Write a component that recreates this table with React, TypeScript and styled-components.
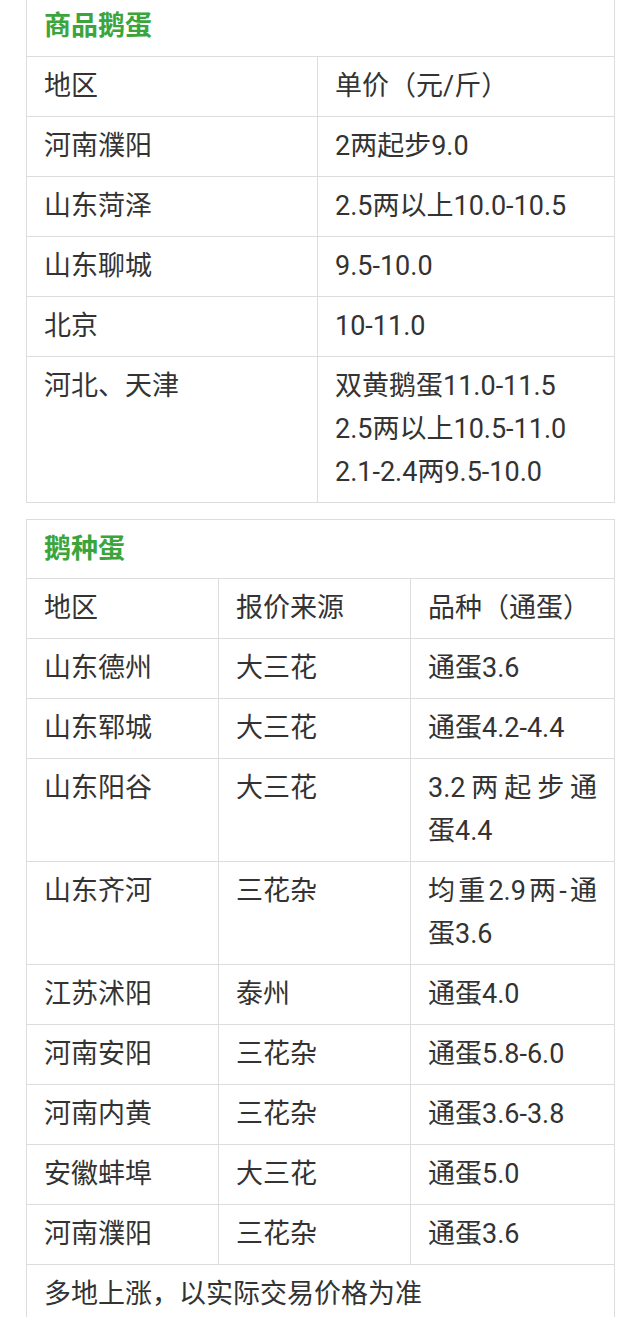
import styled, { createGlobalStyle } from 'styled-components';

const GlobalStyle = createGlobalStyle`
  html, body {
    margin: 0;
    padding: 0;
    background: #ffffff;
  }
  body {
    font-family: Roboto, "Noto Sans CJK SC", sans-serif;
    color: #333333;
  }
`;

const Page = styled.div`
  width: 640px;
  padding: 0 26px;
  margin-top: -4px;
  box-sizing: border-box;
  display: flex;
  flex-direction: column;
  gap: 16px;
`;

const Table = styled.table`
  width: 588px;
  border-collapse: collapse;
  table-layout: fixed;
  font-size: 27px;
`;

const Col = styled.col<{ $w: number }>`
  width: ${(p) => p.$w}px;
`;

const Cell = styled.td`
  border: 1px solid #dddddd;
  padding: 8px 17px;
  line-height: 43px;
  text-align: justify;
  vertical-align: top;
  color: #333333;
  word-break: break-all;
`;

const TitleCell = styled(Cell)`
  color: #3ba53b;
  font-weight: bold;
  padding-bottom: 7.5px;
`;

const Line = styled.div`
  display: block;
`;

const eggRows = [
  ['地区', '单价（元/斤）'],
  ['河南濮阳', '2两起步9.0'],
  ['山东菏泽', '2.5两以上10.0-10.5'],
  ['山东聊城', '9.5-10.0'],
  ['北京', '10-11.0'],
  ['河北、天津', '双黄鹅蛋11.0-11.5\n2.5两以上10.5-11.0\n2.1-2.4两9.5-10.0'],
];

const seedRows = [
  ['地区', '报价来源', '品种（通蛋）'],
  ['山东德州', '大三花', '通蛋3.6'],
  ['山东郓城', '大三花', '通蛋4.2-4.4'],
  ['山东阳谷', '大三花', '3.2两起步通蛋4.4'],
  ['山东齐河', '三花杂', '均重2.9两-通蛋3.6'],
  ['江苏沭阳', '泰州', '通蛋4.0'],
  ['河南安阳', '三花杂', '通蛋5.8-6.0'],
  ['河南内黄', '三花杂', '通蛋3.6-3.8'],
  ['安徽蚌埠', '大三花', '通蛋5.0'],
  ['河南濮阳', '三花杂', '通蛋3.6'],
];

function Lines({ text }: { text: string }) {
  return (
    <>
      {text.split('\n').map((p, i) => (
        <Line key={i}>{p}</Line>
      ))}
    </>
  );
}

export default function App() {
  return (
    <>
      <GlobalStyle />
      <Page>
        <Table>
          <colgroup>
            <Col $w={291} />
            <Col $w={297} />
          </colgroup>
          <tbody>
            <tr>
              <TitleCell colSpan={2}>商品鹅蛋</TitleCell>
            </tr>
            {eggRows.map((row, i) => (
              <tr key={i}>
                {row.map((c, j) => (
                  <Cell key={j}>
                    <Lines text={c} />
                  </Cell>
                ))}
              </tr>
            ))}
          </tbody>
        </Table>

        <Table>
          <colgroup>
            <Col $w={192} />
            <Col $w={192} />
            <Col $w={204} />
          </colgroup>
          <tbody>
            <tr>
              <TitleCell colSpan={3}>鹅种蛋</TitleCell>
            </tr>
            {seedRows.map((row, i) => (
              <tr key={i}>
                {row.map((c, j) => (
                  <Cell key={j}>{c}</Cell>
                ))}
              </tr>
            ))}
            <tr>
              <Cell colSpan={3}>多地上涨，以实际交易价格为准</Cell>
            </tr>
          </tbody>
        </Table>
      </Page>
    </>
  );
}
